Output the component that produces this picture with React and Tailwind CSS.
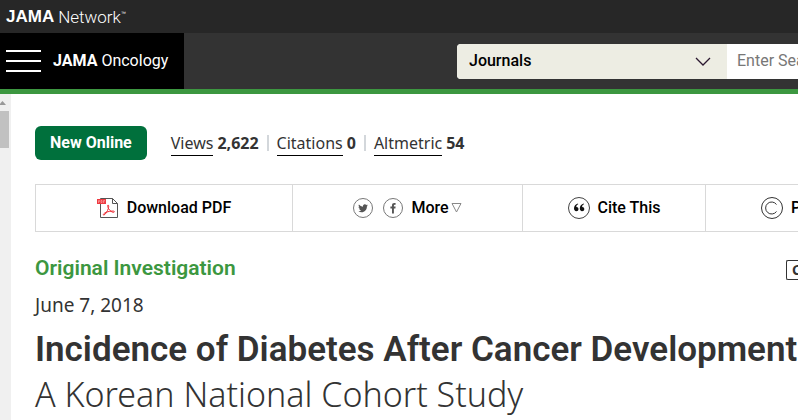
import React from "react";

function PdfIcon() {
  return (
    <svg width="22" height="22" viewBox="0 0 22 22" fill="none" aria-hidden="true">
      <path d="M3.5 1.5h12l5 5v14h-17z" fill="#fff" stroke="#555" />
      <path d="M15.5 1.5v5h5" stroke="#555" />
      <path d="M0 2h9v5H0z" fill="#ee3a41" />
      <path
        d="M1.5 6V3.500h1v1h-1M4 3.500V5.500h1V3.500zM6.500 6V3.500h1.500M6.500 4.700h1"
        stroke="#fbb"
        strokeWidth="0.500"
      />
      <path
        d="M11 8c1 0 .8 2 .3 3.500C10.500 14 8.500 17.500 7 18c-1.500.2-.5-1.700 2-2.600 2.500-1 5-1.500 7.500-1.300 1.800.4.500 1.800-1 1.100-2-.9-3.800-2.800-4.500-4.700-.4-1.300-.5-2.500 0-2.500z"
        stroke="#ee2b33"
      />
    </svg>
  );
}

function TwitterIcon() {
  return (
    <svg width="20" height="20" viewBox="0 0 20 20" fill="none" aria-hidden="true">
      <circle cx="10" cy="10" r="9.500" stroke="#777" />
      <path
        d="M14.800 7.200c-.4.200-.8.300-1.200.300.400-.2.700-.6.900-1.100-.4.200-.8.400-1.200.5a2 2 0 0 0-3.400 1.800 5.600 5.600 0 0 1-4-2.100 2 2 0 0 0 .6 2.700c-.3 0-.6-.1-.9-.3 0 1 .7 1.800 1.600 2-.3.100-.6.100-.9 0 .3.800 1 1.400 1.900 1.400a4 4 0 0 1-2.900.8c4.300 2.500 8.700-.3 8.600-4.800.4-.3.700-.7.900-1.200z"
        fill="#555"
      />
    </svg>
  );
}

function FacebookIcon() {
  return (
    <svg width="20" height="20" viewBox="0 0 20 20" fill="none" aria-hidden="true">
      <circle cx="10" cy="10" r="9.500" stroke="#777" />
      <path
        d="M9 15.500v-5H7.400V8.600H9V7.400C9 5.800 9.900 5 11.300 5h1.300v1.800h-.9c-.6 0-.8.300-.8.800v1h1.700l-.2 1.900h-1.500v5z"
        fill="#555"
      />
    </svg>
  );
}

function QuoteIcon() {
  return (
    <svg width="22" height="22" viewBox="0 0 22 22" fill="none" aria-hidden="true">
      <circle cx="11" cy="11" r="10.500" stroke="#444" />
      <path
        d="M10.200 7.200C8.800 7.700 8.300 8.800 8.300 9.900c1.300-.1 2.200.7 2.200 2s-.9 2.300-2.200 2.300c-1.500 0-2.300-1.200-2.300-2.900 0-2.500 1.500-4.300 4-4.900zM16 7.200c-1.400.5-1.900 1.600-1.900 2.700 1.300-.1 2.200.7 2.200 2s-.9 2.300-2.200 2.300c-1.500 0-2.300-1.200-2.300-2.900 0-2.500 1.500-4.300 4-4.900z"
        fill="#111"
      />
    </svg>
  );
}

function CopyrightIcon() {
  return (
    <svg width="22" height="22" viewBox="0 0 22 22" fill="none" aria-hidden="true">
      <circle cx="11" cy="11" r="10.500" stroke="#333" />
      <path d="M15.500 7.500a6 6 0 1 0 0 7" stroke="#333" />
    </svg>
  );
}

const metrics = [
  { label: "Views", value: "2,622" },
  { label: "Citations", value: "0" },
  { label: "Altmetric", value: "54" },
];

export default function App() {
  return (
    <div className="overflow-hidden bg-white font-['Noto_Sans',sans-serif] text-[#333]">
      <header className="border-b-5 border-[#3c9740] bg-[#333]">
        <div className="flex h-[33px] items-center bg-[#272727] px-1.5">
          <a
            href="#network"
            className="flex font-['Liberation_Sans',sans-serif] text-[17px] leading-5 text-white"
          >
            <span className="font-bold">JAMA</span>
            <span className="ml-1 font-['Roboto',sans-serif] text-[17px] leading-5 font-light">
              Network
            </span>
            <span className="text-[5px] leading-3">™</span>
          </a>
        </div>
        <div className="flex h-14 items-center justify-between">
          <div className="flex h-full items-center gap-3 bg-black pr-4 pl-1.5">
            <button aria-label="Menu" className="flex flex-col gap-2">
              <span className="h-0.5 w-[35px] bg-white" />
              <span className="h-0.5 w-[35px] bg-white" />
              <span className="h-0.5 w-[35px] bg-white" />
            </button>
            <a
              href="#oncology"
              className="font-['Roboto',sans-serif] text-base whitespace-nowrap text-white"
            >
              <b>JAMA</b> Oncology
            </a>
          </div>
          <form className="flex h-[35px] w-[341px] shrink-0 overflow-hidden rounded-l bg-white">
            <div className="relative w-[270px] shrink-0">
              <select
                aria-label="Search in"
                className="h-full w-full appearance-none bg-[#edede3] px-3 font-['Roboto',sans-serif] text-base font-medium text-black"
              >
                <option>Journals</option>
              </select>
              <svg
                className="pointer-events-none absolute top-3 right-4"
                width="16"
                height="12"
                viewBox="0 0 16 12"
                fill="none"
                aria-hidden="true"
              >
                <path d="M1 2l7 7 7-7" stroke="#2b1830" strokeWidth="1.300" />
              </svg>
            </div>
            <input
              aria-label="Search term"
              placeholder="Enter Search Term"
              className="w-40 shrink-0 px-2.5 font-['Roboto',sans-serif] text-base placeholder:text-[#777]"
            />
          </form>
        </div>
      </header>

      <div className="flex">
        <div className="w-[11px] shrink-0 bg-[#f0f0f0]" aria-hidden="true">
          <svg width="9" height="17" viewBox="0 0 9 17">
            <path d="M-1 11l3.500-4L6 11z" fill="#999" />
          </svg>
          <div className="h-[37px] w-[9px] bg-[#c1c1c1]" />
        </div>

        <main className="min-w-0 flex-1 pb-2 pl-6">
          <div className="flex items-center pt-8">
            <span className="mr-6 rounded-md bg-[#00703c] px-[15px] py-1 font-['Roboto',sans-serif] text-base leading-[26px] font-bold text-white">
              New Online
            </span>
            <ul className="flex text-base leading-6">
              {metrics.map((metric, i) => (
                <li key={metric.label} className="flex items-center">
                  {i > 0 && <span className="mx-2 h-4 w-0.5 bg-[#d3d7db]" />}
                  <a href={`#${metric.label}`} className="border-b border-black">
                    {metric.label}
                  </a>
                  <b className="ml-1">{metric.value}</b>
                </li>
              ))}
            </ul>
          </div>

          <div className="mt-6 flex h-12 border border-r-0 border-[#d9d9d9] font-['Roboto',sans-serif] text-base font-medium whitespace-nowrap text-black">
            <a
              href="#pdf"
              className="flex w-[257px] shrink-0 items-center justify-center gap-2 border-r border-[#d9d9d9]"
            >
              <PdfIcon />
              Download PDF
            </a>
            <div className="flex w-[230px] shrink-0 items-center justify-center gap-2 border-r border-[#d9d9d9]">
              <div className="flex gap-2.5">
                <a href="#twitter" aria-label="Twitter">
                  <TwitterIcon />
                </a>
                <a href="#facebook" aria-label="Facebook">
                  <FacebookIcon />
                </a>
              </div>
              <button className="flex items-center gap-0.5">
                More
                <svg width="11" height="10" viewBox="0 0 11 10" fill="none" aria-hidden="true">
                  <path d="M1 .5h9L5.500 9z" stroke="#888" />
                </svg>
              </button>
            </div>
            <button className="flex w-[183px] shrink-0 items-center justify-center gap-2 border-r border-[#d9d9d9]">
              <QuoteIcon />
              Cite This
            </button>
            <a href="#permissions" className="flex shrink-0 items-center gap-2 pl-[55px]">
              <CopyrightIcon />
              Permissions
            </a>
          </div>

          <div className="mt-[22px] flex items-center justify-between">
            <p className="font-['Roboto',sans-serif] text-[21px] leading-7 font-semibold text-[#3c9740]">
              Original Investigation
            </p>
            <span className="mt-1 w-3 rounded-l-xs border border-r-0 border-[#333] pl-[5px] text-sm leading-[18px] font-bold">
              C
            </span>
          </div>
          <time className="mt-[11px] block text-[19px] leading-6">June 7, 2018</time>
          <h1 className="mt-2.5 font-['Roboto',sans-serif] text-[35px] leading-[45px] font-semibold whitespace-nowrap">
            Incidence of Diabetes After Cancer Development
            <span className="block font-['Noto_Sans',sans-serif] text-[34px] font-light">
              A Korean National Cohort Study
            </span>
          </h1>
        </main>
      </div>
    </div>
  );
}
